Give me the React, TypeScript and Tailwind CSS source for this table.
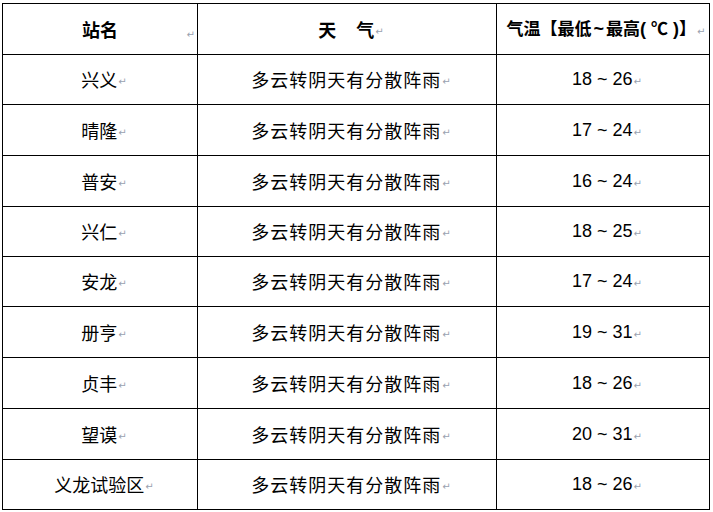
import React from "react";

const rows = [
  { name: "兴义", lo: 18, hi: 26, h: "h-[50px]" },
  { name: "晴隆", lo: 17, hi: 24, h: "h-[51px]" },
  { name: "普安", lo: 16, hi: 24, h: "h-[51px]" },
  { name: "兴仁", lo: 18, hi: 25, h: "h-[50px]" },
  { name: "安龙", lo: 17, hi: 24, h: "h-[50px]" },
  { name: "册亨", lo: 19, hi: 31, h: "h-[51px]" },
  { name: "贞丰", lo: 18, hi: 26, h: "h-[51px]" },
  { name: "望谟", lo: 20, hi: 31, h: "h-[51px]" },
  { name: "义龙试验区", lo: 18, hi: 26, h: "h-[50px]" },
];

const cjk = "font-['Noto_Sans_CJK_SC',sans-serif]";
const num = "font-['Liberation_Sans','Noto_Sans_CJK_SC',sans-serif]";

function Mark() {
  return <span className="text-[10px] text-gray-400 font-['DejaVu_Sans',sans-serif] ml-[1px] translate-y-[2px] inline-block">↵</span>;
}

export default function App() {
  return (
    <div className="w-[713px] h-[512px] bg-white pt-[3px] pl-[2px] text-black">
      <div className="grid grid-cols-[195px_299px_213px] w-[708px] border-l border-t border-black">
        <div className="h-[51px] border-r border-b border-black flex items-center justify-center relative">
          <span className={`${cjk} font-bold text-[18px]`}>站名</span>
          <span className="absolute right-[2px] top-[14px]"><Mark /></span>
        </div>
        <div className="h-[51px] border-r border-b border-black flex items-center justify-center pl-[8px]">
          <span className={`${cjk} font-bold text-[18px]`}>天</span>
          <span className="w-[20px]" />
          <span className={`${cjk} font-bold text-[18px]`}>气</span>
          <Mark />
        </div>
        <div className="h-[51px] border-r border-b border-black flex items-center justify-center pl-[6px]">
          <span className={`${cjk} font-bold text-[17px] whitespace-nowrap`}>
            气温【最低<span className={`${num} font-bold text-[18px] mx-[2px]`}>~</span>最高<span className={`${num} font-bold text-[18px]`}>( </span>℃<span className={`${num} font-bold text-[18px]`}> )</span>】
          </span>
          <Mark />
        </div>
        {rows.map((r) => (
          <React.Fragment key={r.name}>
            <div className={`${r.h} border-r border-b border-black flex items-center justify-center pl-[8px]`}>
              <span className={`${cjk} text-[18px]`}>{r.name}</span>
              <Mark />
            </div>
            <div className={`${r.h} border-r border-b border-black flex items-center justify-center pl-[8px]`}>
              <span className={`${cjk} text-[18px] tracking-[1px]`}>多云转阴天有分散阵雨</span>
              <Mark />
            </div>
            <div className={`${r.h} border-r border-b border-black flex items-center justify-center pl-[8px]`}>
              <span className={`${num} text-[18px]`}>{r.lo} ~ {r.hi}</span>
              <Mark />
            </div>
          </React.Fragment>
        ))}
      </div>
    </div>
  );
}
